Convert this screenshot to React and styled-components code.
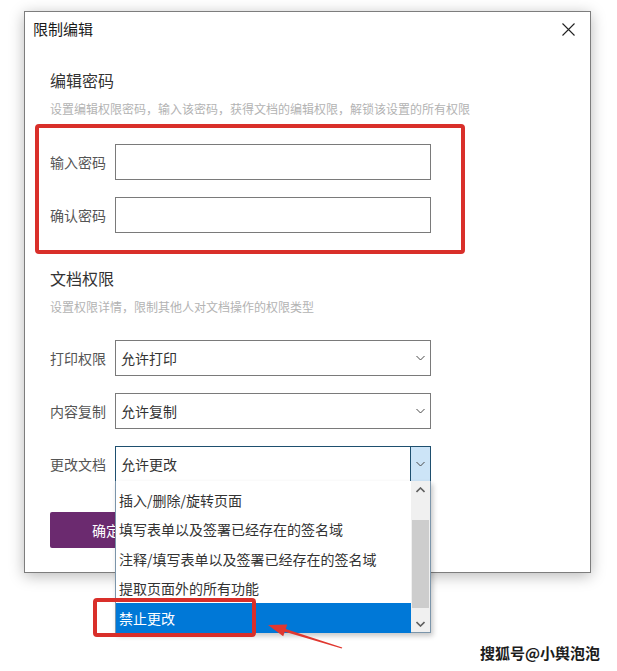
import React from "react";
import styled, { createGlobalStyle } from "styled-components";

const GlobalStyle = createGlobalStyle`
  html, body {
    margin: 0;
    padding: 0;
    background: #fff;
  }
  body {
    font-family: "Noto Sans CJK SC", "Noto Sans", sans-serif;
    color: #333;
  }
`;

const printOptions = ["允许打印"];
const editOptions = [
  "插入/删除/旋转页面",
  "填写表单以及签署已经存在的签名域",
  "注释/填写表单以及签署已经存在的签名域",
  "提取页面外的所有功能",
  "禁止更改",
];

const Chevron = ({ up, color = "#4a4a4a", weight = 1 }) => (
  <svg width="9" height="6" viewBox="0 0 9 6">
    <polyline
      points={up ? "0.5,5 4.5,1 8.5,5" : "0.5,1 4.5,5 8.5,1"}
      fill="none"
      stroke={color}
      strokeWidth={weight}
    />
  </svg>
);

const CloseIcon = () => (
  <svg width="13" height="13" viewBox="0 0 13 13">
    <path d="M0.5 0.5 L12.5 12.5 M12.5 0.5 L0.5 12.5" stroke="#222" strokeWidth="1.1" />
  </svg>
);

const Select = ({ value, open, options }) => (
  <SelectBox $open={open}>
    <SelectText>{value}</SelectText>
    <ArrowCell $open={open}>
      <Chevron />
    </ArrowCell>
    {open && (
      <DropList>
        <Items>
          {options.map((o, i) => (
            <Item key={o} $active={i === options.length - 1}>{o}</Item>
          ))}
        </Items>
        <ScrollBar>
          <ScrollArrow><Chevron up color="#5f5f5f" weight={1.6} /></ScrollArrow>
          <Thumb />
          <ScrollArrow $bottom><Chevron color="#5f5f5f" weight={1.6} /></ScrollArrow>
        </ScrollBar>
      </DropList>
    )}
  </SelectBox>
);

export default () => (
  <>
    <GlobalStyle />
    <Page>
      <Dialog>
        <Header>
          <Title>限制编辑</Title>
          <CloseIcon />
        </Header>
        <Body>
          <SectionTitle $top={23}>编辑密码</SectionTitle>
          <Hint>设置编辑权限密码，输入该密码，获得文档的编辑权限，解锁该设置的所有权限</Hint>
          <Fields $top={26}>
            <Row>
              <Label>输入密码</Label>
              <TextBox type="password" />
            </Row>
            <Row>
              <Label>确认密码</Label>
              <TextBox type="password" />
            </Row>
          </Fields>
          <SectionTitle $top={34}>文档权限</SectionTitle>
          <Hint>设置权限详情，限制其他人对文档操作的权限类型</Hint>
          <Fields $top={24}>
            <Row>
              <Label>打印权限</Label>
              <Select value="允许打印" options={printOptions} />
            </Row>
            <Row>
              <Label>内容复制</Label>
              <Select value="允许复制" />
            </Row>
            <Row>
              <Label>更改文档</Label>
              <Select value="允许更改" open options={editOptions} />
            </Row>
          </Fields>
          <Actions>
            <PrimaryButton>确定</PrimaryButton>
          </Actions>
        </Body>
      </Dialog>

      <RedFrame $x={35} $y={124} $w={430} $h={130} />
      <RedFrame $x={93} $y={598} $w={163} $h={39} />
      <Pointer width="84" height="40" viewBox="0 0 84 40">
        <polygon
          points="6,10 25.2,9.4 23.7,13.9 80.3,32.6 79.7,33.4 22.8,16.7 21.2,21.2"
          fill="#e0372f"
        />
      </Pointer>
      <Watermark>搜狐号@小舆泡泡</Watermark>
    </Page>
  </>
);

// Styling

const Page = styled.div`
  position: relative;
  width: 617px;
  height: 671px;
  overflow: hidden;
  box-sizing: border-box;
  padding: 11px 0 0 24px;
`;

const Dialog = styled.div`
  width: 567px;
  box-sizing: border-box;
  background: #fff;
  border: 1px solid #7d7d7d;
  box-shadow: 0 3px 14px rgba(0, 0, 0, 0.28);
`;

const Header = styled.div`
  height: 34px;
  display: flex;
  align-items: center;
  justify-content: space-between;
  padding: 0 15px 0 8px;
`;

const Title = styled.div`
  font-size: 15px;
  line-height: 20px;
  color: #1a1a1a;
`;

const Body = styled.div`
  padding: 0 25px 24px 25px;
`;

const SectionTitle = styled.div`
  margin-top: ${(p) => p.$top}px;
  font-size: 16px;
  line-height: 22px;
  color: #333;
`;

const Hint = styled.div`
  margin-top: 9px;
  font-size: 12px;
  line-height: 18px;
  color: #b3b3b3;
  white-space: nowrap;
`;

const Fields = styled.div`
  margin-top: ${(p) => p.$top}px;
  display: flex;
  flex-direction: column;
  gap: 17px;
`;

const Row = styled.div`
  display: flex;
  align-items: center;
  height: 36px;
`;

const Label = styled.div`
  width: 65px;
  flex: none;
  font-size: 14px;
  line-height: 20px;
  color: #555;
`;

const TextBox = styled.input`
  width: 316px;
  height: 36px;
  box-sizing: border-box;
  border: 1px solid #7a7a7a;
  border-radius: 0;
  outline: none;
  padding: 0 6px;
  margin: 0;
  background: #fff;
`;

const SelectBox = styled.div`
  position: relative;
  width: 316px;
  height: 36px;
  box-sizing: border-box;
  display: flex;
  align-items: stretch;
  border: 1px solid ${(p) => (p.$open ? "#1e4f6f" : "#7a7a7a")};
  background: #fff;
`;

const SelectText = styled.div`
  flex: 1;
  display: flex;
  align-items: center;
  padding-left: 5px;
  font-size: 14px;
  color: #333;
`;

const ArrowCell = styled.div`
  width: 19px;
  display: flex;
  align-items: center;
  justify-content: center;
  background: ${(p) => (p.$open ? "#cce4f7" : "transparent")};
  border-left: 1px solid ${(p) => (p.$open ? "#1e4f6f" : "transparent")};
`;

const DropList = styled.div`
  position: absolute;
  top: 100%;
  left: -1px;
  width: 316px;
  height: 152px;
  box-sizing: border-box;
  display: flex;
  background: #fff;
  border: 1px solid #7b95aa;
  border-top: none;
  box-shadow: 2px 3px 5px rgba(0, 0, 0, 0.22);
  z-index: 2;
`;

const Items = styled.div`
  flex: 1;
  padding-top: 4px;
`;

const Item = styled.div`
  height: 29.5px;
  display: flex;
  align-items: center;
  padding-left: 3px;
  font-size: 14px;
  color: ${(p) => (p.$active ? "#fff" : "#333")};
  background: ${(p) => (p.$active ? "#0078d7" : "transparent")};
`;

const ScrollBar = styled.div`
  width: 19px;
  display: flex;
  flex-direction: column;
  background: #f0f0f0;
`;

const ScrollArrow = styled.div`
  height: 17px;
  display: flex;
  align-items: center;
  justify-content: center;
  margin-top: ${(p) => (p.$bottom ? "auto" : "0")};
`;

const Thumb = styled.div`
  margin: 22px 1px 0 1px;
  height: 88px;
  background: #cdcdcd;
`;

const Actions = styled.div`
  margin-top: 30px;
  display: flex;
`;

const PrimaryButton = styled.button`
  width: 112px;
  height: 36px;
  border: none;
  border-radius: 2px;
  background: #6b2a6f;
  color: #fff;
  font-family: inherit;
  font-size: 14px;
  padding: 0;
`;

const RedFrame = styled.div`
  position: absolute;
  left: ${(p) => p.$x}px;
  top: ${(p) => p.$y}px;
  width: ${(p) => p.$w}px;
  height: ${(p) => p.$h}px;
  box-sizing: border-box;
  border: 4px solid #d92f2a;
  border-radius: 4px;
  z-index: 3;
`;

const Pointer = styled.svg`
  position: absolute;
  left: 262px;
  top: 615px;
  z-index: 3;
`;

const Watermark = styled.div`
  position: absolute;
  left: 480px;
  top: 643px;
  font-size: 15px;
  line-height: 20px;
  font-weight: 700;
  color: #1c1c1c;
  white-space: nowrap;
  text-shadow: 0 0 2px #fff, 0 0 2px #fff, 1px 1px 1px #fff;
`;
